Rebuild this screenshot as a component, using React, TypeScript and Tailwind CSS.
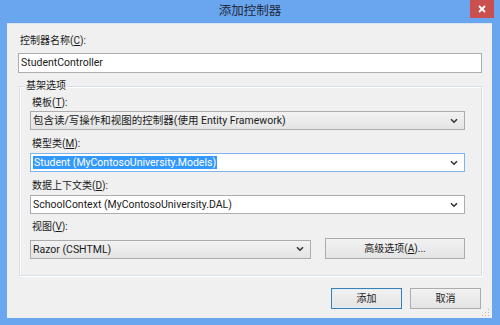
import React from "react";

const font = "font-['Roboto','Noto_Sans_CJK_SC',sans-serif]";

function Chevron() {
  return (
    <svg width="8" height="6" viewBox="0 0 8 6" className="shrink-0">
      <path d="M1 1.2 L4 4.2 L7 1.2" fill="none" stroke="#333" strokeWidth="1.6" />
    </svg>
  );
}

function Combo({ text, editable, focused, selected, className }: {
  text: string;
  editable?: boolean;
  focused?: boolean;
  selected?: boolean;
  className?: string;
}) {
  const box = editable
    ? focused
      ? "bg-white border-[#7eb4ea]"
      : "bg-white border-[#abadb3]"
    : "bg-gradient-to-b from-[#f2f2f2] to-[#e4e4e4] border-[#acacac]";
  return (
    <div className={`h-[19px] border flex items-center pl-[2px] pr-[6px] ${box} ${className ?? ""}`}>
      <div className="flex-1 min-w-0 truncate text-[10.5px] leading-[15px] text-[#1a1a1a]">
        {selected ? <span className="bg-[#3399ff] text-white px-[1px]">{text}</span> : text}
      </div>
      <Chevron />
    </div>
  );
}

function Label({ children, className }: { children: React.ReactNode; className?: string }) {
  return <div className={`text-[10px] leading-[14px] text-[#1a1a1a] ${className ?? ""}`}>{children}</div>;
}

function Button({ children, primary, className }: { children: React.ReactNode; primary?: boolean; className?: string }) {
  return (
    <div
      className={`h-[21px] border flex items-center justify-center text-[10px] text-[#1a1a1a] bg-gradient-to-b from-[#f2f2f2] to-[#e4e4e4] ${
        primary ? "border-[#3c7fb1] shadow-[inset_0_0_0_1px_#e0edf8]" : "border-[#acacac]"
      } ${className ?? ""}`}
    >
      {children}
    </div>
  );
}

export default function App() {
  return (
    <div className={`w-[500px] h-[325px] bg-[#6aa6ef] flex flex-col ${font}`}>
      <div className="h-[26px] relative flex items-center justify-center">
        <span className="text-[12.5px] text-[#1e2a3a]">添加控制器</span>
        <div className="absolute right-[6px] top-0 w-[24px] h-[18px] bg-[#c9504e] flex items-center justify-center">
          <svg width="8" height="8" viewBox="0 0 8 8">
            <path d="M1 1 L7 7 M7 1 L1 7" stroke="white" strokeWidth="1.8" />
          </svg>
        </div>
      </div>
      <div className="ml-[7px] mr-[8px] mb-[7px] flex-1 bg-[#f0f0f0] border-t border-[#d9e4f0] flex flex-col pl-[11px] pr-[10px]">
        <Label className="mt-[10px] ml-[2px]">
          控制器名称(<span className="underline">C</span>):
        </Label>
        <div className="mt-[5px] h-[20px] bg-white border border-[#abadb3] flex items-center pl-[2px] text-[10.5px] text-[#1a1a1a]">
          StudentController
        </div>
        <div className="mt-[13px] ml-[1px] border border-[#d5dfe5] shadow-[inset_1px_1px_0_#ffffff,1px_1px_0_#ffffff] flex flex-col pl-[10px] pr-[16px] pb-[16px]">
          <div className="-mt-[8px] -ml-[5px] w-fit px-[1px] bg-[#f0f0f0] text-[10px] leading-[14px] text-[#1a1a1a]">
            基架选项
          </div>
          <Label className="mt-[3px] ml-[2px]">
            模板(<span className="underline">T</span>):
          </Label>
          <Combo className="mt-[1px]" text="包含读/写操作和视图的控制器(使用 Entity Framework)" />
          <Label className="mt-[7px] ml-[2px]">
            模型类(<span className="underline">M</span>):
          </Label>
          <Combo className="mt-[2px]" editable focused selected text="Student (MyContosoUniversity.Models)" />
          <Label className="mt-[7px] ml-[2px]">
            数据上下文类(<span className="underline">D</span>):
          </Label>
          <Combo className="mt-[2px]" editable text="SchoolContext (MyContosoUniversity.DAL)" />
          <Label className="mt-[6px] ml-[2px]">
            视图(<span className="underline">V</span>):
          </Label>
          <div className="mt-[4px] flex items-center gap-[14px]">
            <Combo className="w-[281px] mt-[1px]" text="Razor (CSHTML)" />
            <Button className="flex-1">
              高级选项(<span className="underline">A</span>)...
            </Button>
          </div>
        </div>
        <div className="mt-[12px] flex justify-end gap-[8px] pr-[1px]">
          <Button primary className="w-[71px]">添加</Button>
          <Button className="w-[71px]">取消</Button>
        </div>
        <div className="flex-1 flex items-end justify-end -mr-[8px] pb-[1px]">
          <svg width="8" height="8" viewBox="0 0 8 8">
            <g fill="#b8b8b8">
              <rect x="6" y="0" width="1" height="1" />
              <rect x="3" y="3" width="1" height="1" />
              <rect x="6" y="3" width="1" height="1" />
              <rect x="0" y="6" width="1" height="1" />
              <rect x="3" y="6" width="1" height="1" />
              <rect x="6" y="6" width="1" height="1" />
            </g>
          </svg>
        </div>
      </div>
    </div>
  );
}
